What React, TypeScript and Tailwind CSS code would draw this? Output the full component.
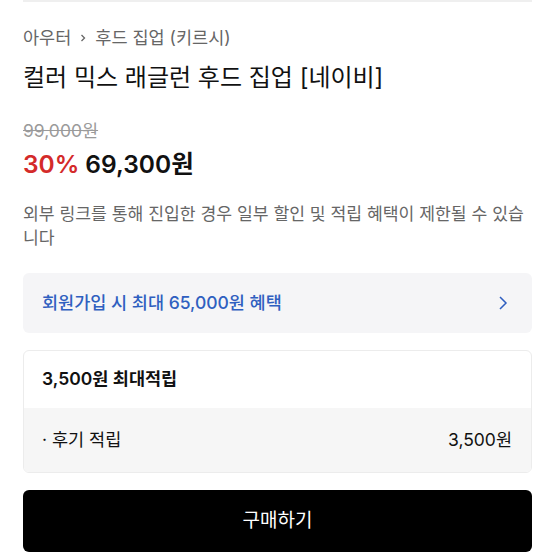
import React from "react";

const font = { fontFamily: 'Inter, "Noto Sans CJK KR", sans-serif' };

export default function App() {
  return (
    <div className="w-[555px] h-[555px] bg-white overflow-hidden px-[23px]" style={font}>
      <div className="h-[2px] bg-[#efefef]" />
      <div className="mt-[24px] h-[24px] flex items-center text-[17.5px] text-[#666]">
        <span>아우터</span>
        <svg width="12" height="12" viewBox="0 0 12 12" className="mx-[6px]">
          <path d="M4.5 3 L7.5 6 L4.5 9" fill="none" stroke="#666" strokeWidth="1.3" />
        </svg>
        <span>후드 집업 (키르시)</span>
      </div>
      <div className="mt-[13px] h-[30px] flex items-center text-[24px] text-[#111]">
        컬러 믹스 래글런 후드 집업 [네이비]
      </div>
      <div className="mt-[26px] h-[24px] flex items-center text-[17.5px] text-[#9a9a9a] line-through">
        99,000원
      </div>
      <div className="mt-[6px] h-[30px] flex items-center text-[24.5px] font-semibold">
        <span className="text-[#d42a2a]">30%</span>
        <span className="ml-[6px] text-[#111]">69,300원</span>
      </div>
      <p className="mt-[23px] text-[17.2px] leading-[24px] text-[#666]">
        외부 링크를 통해 진입한 경우 일부 할인 및 적립 혜택이 제한될 수 있습니다
      </p>
      <div className="mt-[23px] h-[60px] rounded-[6px] bg-[#f5f5f7] flex items-center justify-between pl-[19px] pr-[24px]">
        <span className="text-[17.5px] font-medium text-[#2f5fc0]">
          회원가입 시 최대 65,000원 혜택
        </span>
        <svg width="10" height="16" viewBox="0 0 10 16">
          <path d="M2 2 L8 8 L2 14" fill="none" stroke="#2f5fc0" strokeWidth="1.5" />
        </svg>
      </div>
      <div className="mt-[17px] rounded-[6px] border border-[#ececec] overflow-hidden">
        <div className="h-[57px] flex items-center pl-[18px] text-[17.5px] font-semibold text-[#111]">
          3,500원 최대적립
        </div>
        <div className="h-[64px] bg-[#f6f6f6] flex items-center justify-between pl-[18px] pr-[19px] text-[17.5px] text-[#111]">
          <span>· 후기 적립</span>
          <span>3,500원</span>
        </div>
      </div>
      <button className="mt-[17px] w-full h-[62px] rounded-[6px] bg-black text-white text-[19px] flex items-center justify-center">
        구매하기
      </button>
    </div>
  );
}
